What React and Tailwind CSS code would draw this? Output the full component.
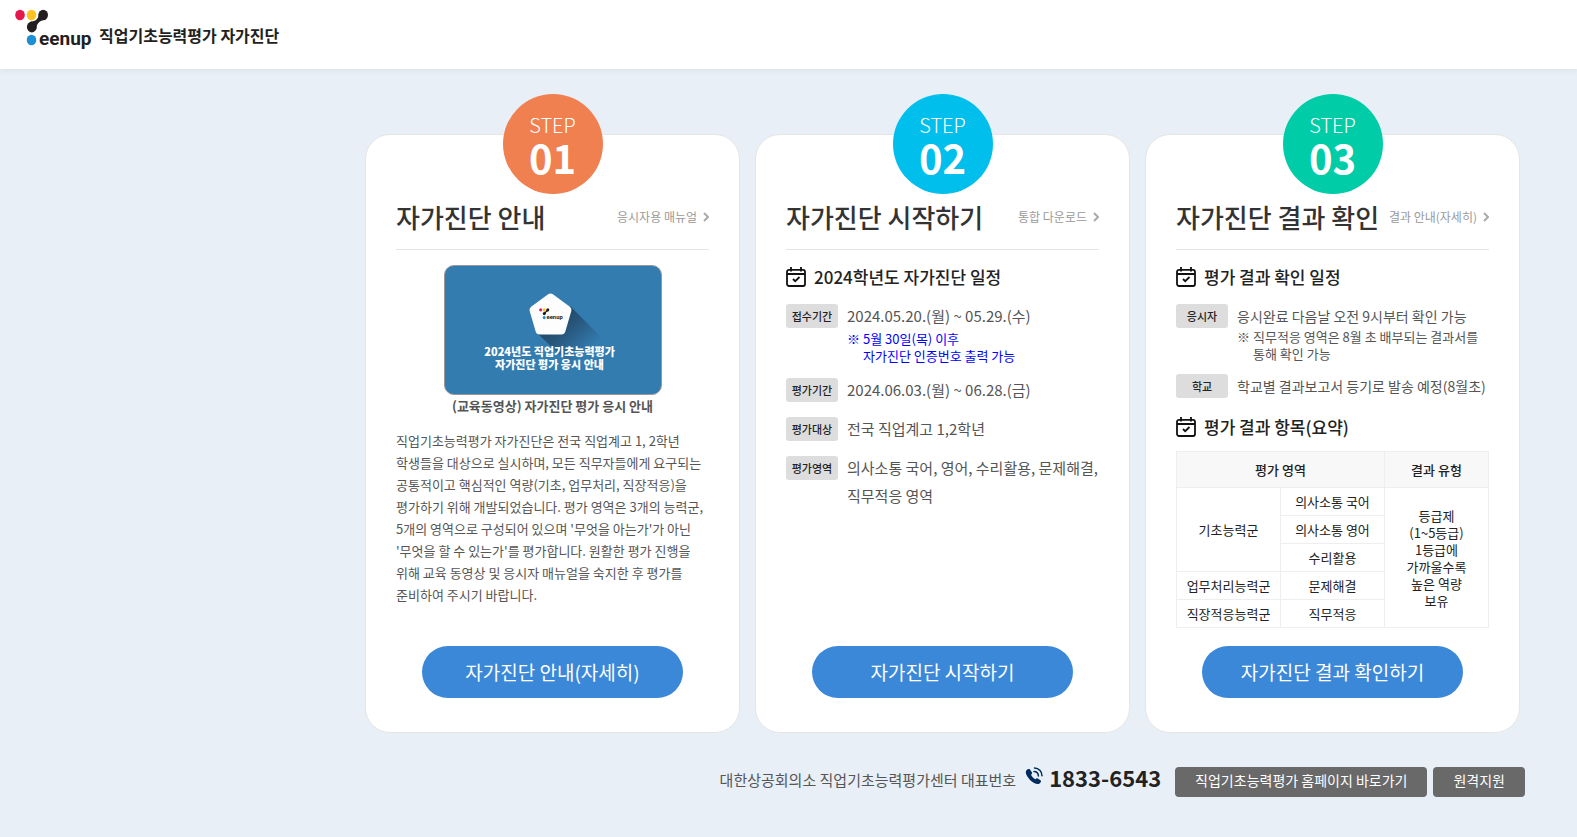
import { clsx } from "clsx";

const schedule = [
  {
    label: "접수기간",
    value: "2024.05.20.(월) ~ 05.29.(수)",
    note: ["5월 30일(목) 이후", "자가진단 인증번호 출력 가능"],
  },
  { label: "평가기간", value: "2024.06.03.(월) ~ 06.28.(금)" },
  { label: "평가대상", value: "전국 직업계고 1,2학년" },
  { label: "평가영역", value: "의사소통 국어, 영어, 수리활용, 문제해결, 직무적응 영역" },
];

const resultSchedule = [
  {
    label: "응시자",
    value: "응시완료 다음날 오전 9시부터 확인 가능",
    note: ["직무적응 영역은 8월 초 배부되는 결과서를", "통해 확인 가능"],
  },
  { label: "학교", value: "학교별 결과보고서 등기로 발송 예정(8월초)" },
];

const introLines = [
  "직업기초능력평가 자가진단은 전국 직업계고 1, 2학년",
  "학생들을 대상으로 실시하며, 모든 직무자들에게 요구되는",
  "공통적이고 핵심적인 역량(기초, 업무처리, 직장적응)을",
  "평가하기 위해 개발되었습니다. 평가 영역은 3개의 능력군,",
  "5개의 영역으로 구성되어 있으며 '무엇을 아는가'가 아닌",
  "'무엇을 할 수 있는가'를 평가합니다. 원활한 평가 진행을",
  "위해 교육 동영상 및 응시자 매뉴얼을 숙지한 후 평가를",
  "준비하여 주시기 바랍니다.",
];

const gradeLines = ["등급제", "(1~5등급)", "1등급에", "가까울수록", "높은 역량", "보유"];

export default function App() {
  return (
    <div className="min-h-screen bg-[#e8eff6] font-['Noto_Sans_CJK_KR',sans-serif] text-[#555]">
      <header className="flex h-[69px] items-start bg-white pl-[15px] pt-[9px] shadow-[0_3px_5px_rgba(0,0,0,0.04)]">
        <a href="#" className="flex items-start gap-[7px]">
          <TeenupLogo className="h-10 w-[77px]" />
          <span className="pt-[14px] text-base leading-6 font-bold text-[#231f20]">
            직업기초능력평가 자가진단
          </span>
        </a>
      </header>

      <main className="pt-[65px] pr-[57px] pl-4">
        <div className="ml-auto grid w-full max-w-[1155px] grid-cols-3 gap-[15px]">
          <StepCard
            step="01"
            color="bg-[#f08050]"
            title="자가진단 안내"
            link="응시자용 매뉴얼"
            action="자가진단 안내(자세히)"
          >
            <Thumbnail />
            <p className="mt-px text-center text-[13px] leading-5 font-bold">
              (교육동영상) 자가진단 평가 응시 안내
            </p>
            <p className="mt-[14px] text-[13px] leading-[22px] whitespace-nowrap">
              {introLines.map((line) => (
                <span key={line} className="block">
                  {line}
                </span>
              ))}
            </p>
          </StepCard>

          <StepCard
            step="02"
            color="bg-[#00bfec]"
            title="자가진단 시작하기"
            link="통합 다운로드"
            action="자가진단 시작하기"
          >
            <SectionTitle>2024학년도 자가진단 일정</SectionTitle>
            <dl className="mt-[13px] space-y-[11px]">
              {schedule.map((row) => (
                <div key={row.label} className="flex gap-[9px]">
                  <Label className="mt-[2px]">{row.label}</Label>
                  <dd className="min-w-0">
                    <p className="text-[15px] leading-7">{row.value}</p>
                    {row.note && <Note lines={row.note} className="pb-px text-[#0000ff]" />}
                  </dd>
                </div>
              ))}
            </dl>
          </StepCard>

          <StepCard
            step="03"
            color="bg-[#00cca8]"
            title="자가진단 결과 확인"
            link="결과 안내(자세히)"
            action="자가진단 결과 확인하기"
          >
            <SectionTitle>평가 결과 확인 일정</SectionTitle>
            <dl className="mt-[15px] space-y-3">
              {resultSchedule.map((row) => (
                <div key={row.label} className="flex gap-[9px]">
                  <Label>{row.label}</Label>
                  <dd className="min-w-0 whitespace-nowrap">
                    <p className="text-sm leading-6">{row.value}</p>
                    {row.note && <Note lines={row.note} />}
                  </dd>
                </div>
              ))}
            </dl>
            <div className="mt-[2px]">
              <SectionTitle>평가 결과 항목(요약)</SectionTitle>
            </div>
            <ResultTable />
          </StepCard>
        </div>
      </main>

      <footer className="flex items-start justify-end pt-[34px] pr-[52px] pb-10 pl-4">
        <p className="text-[15px] leading-[26px]">대한상공회의소 직업기초능력평가센터 대표번호</p>
        <PhoneIcon className="ml-[9px] h-[18px] w-[18px]" />
        <strong className="ml-[6px] text-[22px] leading-5 font-bold text-[#222]">
          1833-6543
        </strong>
        <button
          type="button"
          className="ml-[14px] h-[30px] rounded-[4px] bg-[#696969] px-5 pb-1 text-sm leading-6 text-white"
        >
          직업기초능력평가 홈페이지 바로가기
        </button>
        <button
          type="button"
          className="ml-[6px] h-[30px] rounded-[4px] bg-[#696969] px-5 pb-1 text-sm leading-6 text-white"
        >
          원격지원
        </button>
      </footer>
    </div>
  );
}

function StepCard({ step, color, title, link, action, children }) {
  return (
    <section className="relative flex flex-col rounded-[25px] border border-[#e5e5e5] bg-white px-[30px] pt-16 pb-[34px]">
      <div
        className={clsx(
          "absolute -top-[41px] left-1/2 flex h-[100px] w-[100px] -translate-x-1/2 flex-col items-center rounded-full pt-[19px] text-white",
          color
        )}
      >
        <span className="text-xl leading-6 font-light">STEP</span>
        <strong className="text-[40px] leading-10 font-bold">{step}</strong>
      </div>

      <div className="flex items-start justify-between border-b border-[#e5e5e5] pb-[14px]">
        <h2 className="text-[26px] leading-9 font-medium text-[#333]">{title}</h2>
        <a href="#" className="flex items-center gap-[6px] text-xs leading-9 text-[#999]">
          {link}
          <svg viewBox="0 0 6 10" className="h-[10px] w-[6px]" fill="none" stroke="#aaa" strokeWidth="2">
            <path d="M1 1l4 4-4 4" />
          </svg>
        </a>
      </div>

      {children}

      <div className="mt-auto pt-[18px] text-center">
        <button
          type="button"
          className="h-[52px] w-[261px] rounded-full bg-[#3b88d8] text-[19px] text-white"
        >
          {action}
        </button>
      </div>
    </section>
  );
}

function SectionTitle({ children }) {
  return (
    <h3 className="mt-[15px] flex items-center gap-2 text-[17px] leading-6 font-medium text-[#222]">
      <CalendarIcon className="h-5 w-5" />
      {children}
    </h3>
  );
}

function Label({ children, className }) {
  return (
    <dt
      className={clsx(
        "h-6 w-[52px] shrink-0 rounded-[3px] bg-[#ddd] text-center text-[11px] leading-6 font-medium text-[#222]",
        className
      )}
    >
      {children}
    </dt>
  );
}

function Note({ lines, className }) {
  return (
    <p className={clsx("flex gap-[3px] text-[13px] leading-[17px]", className)}>
      <span>※</span>
      <span>
        {lines.map((line) => (
          <span key={line} className="block">
            {line}
          </span>
        ))}
      </span>
    </p>
  );
}

function ResultTable() {
  const cell = "border border-[#eee] p-0";
  return (
    <table className="mt-3 w-full table-fixed border-collapse text-center text-[13px] leading-[17px] text-[#222]">
      <thead>
        <tr className="h-9 bg-[#f8f8f8]">
          <th colSpan={2} className={clsx(cell, "font-medium")}>
            평가 영역
          </th>
          <th className={clsx(cell, "font-medium")}>결과 유형</th>
        </tr>
      </thead>
      <tbody>
        <tr className="h-7">
          <td rowSpan={3} className={cell}>
            기초능력군
          </td>
          <td className={cell}>의사소통 국어</td>
          <td rowSpan={5} className={cell}>
            {gradeLines.map((line) => (
              <span key={line} className="block">
                {line}
              </span>
            ))}
          </td>
        </tr>
        <tr className="h-7">
          <td className={cell}>의사소통 영어</td>
        </tr>
        <tr className="h-7">
          <td className={cell}>수리활용</td>
        </tr>
        <tr className="h-7">
          <td className={cell}>업무처리능력군</td>
          <td className={cell}>문제해결</td>
        </tr>
        <tr className="h-7">
          <td className={cell}>직장적응능력군</td>
          <td className={cell}>직무적응</td>
        </tr>
      </tbody>
    </table>
  );
}

// Education video poster
function Thumbnail() {
  return (
    <button
      type="button"
      className="relative mx-auto mt-[15px] h-[130px] w-[218px] overflow-hidden rounded-[10px] border border-[#999] bg-[#337cb0]"
    >
      <svg viewBox="0 0 216 128" className="absolute inset-0 h-full w-full">
        <defs>
          <linearGradient id="posterShadow" x1="105" y1="45" x2="142" y2="86" gradientUnits="userSpaceOnUse">
            <stop offset="0" stopColor="#1e4058" />
            <stop offset="0.45" stopColor="#27557a" />
            <stop offset="1" stopColor="#337cb0" />
          </linearGradient>
        </defs>
        <path d="M125 40L168 83L135 108L92 67Z" fill="url(#posterShadow)" />
        <path
          d="M105.500 31.500L122.500 44L116.500 64.500H94.500L88.500 44Z"
          fill="#fdfdfd"
          stroke="#fdfdfd"
          strokeWidth="8"
          strokeLinejoin="round"
        />
        <svg x="94" y="42" width="24" height="13" viewBox="0 0 77 42">
          <LogoShapes />
        </svg>
      </svg>
      <span className="absolute inset-x-0 top-[79px] pr-[6px] text-center text-[11px] leading-[13px] font-black text-white">
        2024년도 직업기초능력평가
        <br />
        자가진단 평가 응시 안내
      </span>
    </button>
  );
}

function LogoShapes() {
  return (
    <>
      <ellipse cx="5" cy="6" rx="4.800" ry="5.200" fill="#e5174f" />
      <ellipse cx="16.500" cy="6" rx="4.800" ry="5.200" fill="#ffc220" />
      <ellipse cx="28.200" cy="6" rx="4.800" ry="5.200" fill="#231f20" />
      <ellipse cx="16.800" cy="18" rx="4.900" ry="5.400" fill="#231f20" />
      <path
        d="M23.600 4.500C24 9.500 20.500 12.600 15.500 12.800L21.300 20C21.300 15 24.500 11.400 30.500 10.800Z"
        fill="#231f20"
      />
      <ellipse cx="16.500" cy="31" rx="4.800" ry="5.200" fill="#1f8fd3" />
      <text x="24" y="36" fill="#231f20" fontSize="19" fontWeight="700" fontFamily="Roboto, sans-serif">
        eenup
      </text>
    </>
  );
}

function TeenupLogo({ className }) {
  return (
    <svg viewBox="0 0 77 40" className={clsx("overflow-visible", className)} role="img" aria-label="Teenup">
      <LogoShapes />
    </svg>
  );
}

function CalendarIcon({ className }) {
  return (
    <svg viewBox="0 0 20 20" className={className} fill="none" stroke="#111" strokeWidth="1.800">
      <rect x="1" y="2.800" width="18" height="16.200" rx="2" />
      <path d="M1 7h18M5 0v4.500M15 0v4.500" />
      <path d="M7 12l2.200 2.200L13.500 10" />
    </svg>
  );
}

function PhoneIcon({ className }) {
  return (
    <svg viewBox="0 0 18 18" className={className}>
      <path
        d="M1.500 3.200C2.500 2 4 1.500 4.800 2.200L7 5.500C7.400 6.300 6.900 7 6.100 7.700C6.500 9.300 8.600 11.600 10.400 12.200C11.200 11.400 11.900 11 12.700 11.400L15.500 13.300C16.500 14.200 15.700 15.600 14.500 16.500C12.500 18 8.500 16.300 5.300 13.200C1.700 9.700-.4 5.600 1.500 3.200Z"
        fill="#002b5c"
      />
      <path
        d="M9 4.400C11.400 4.300 13.400 6.300 13.400 8.900M9.500 1C13.700 1 17 4.500 17 8.700"
        fill="none"
        stroke="#002b5c"
        strokeWidth="1.500"
        strokeLinecap="round"
      />
    </svg>
  );
}
